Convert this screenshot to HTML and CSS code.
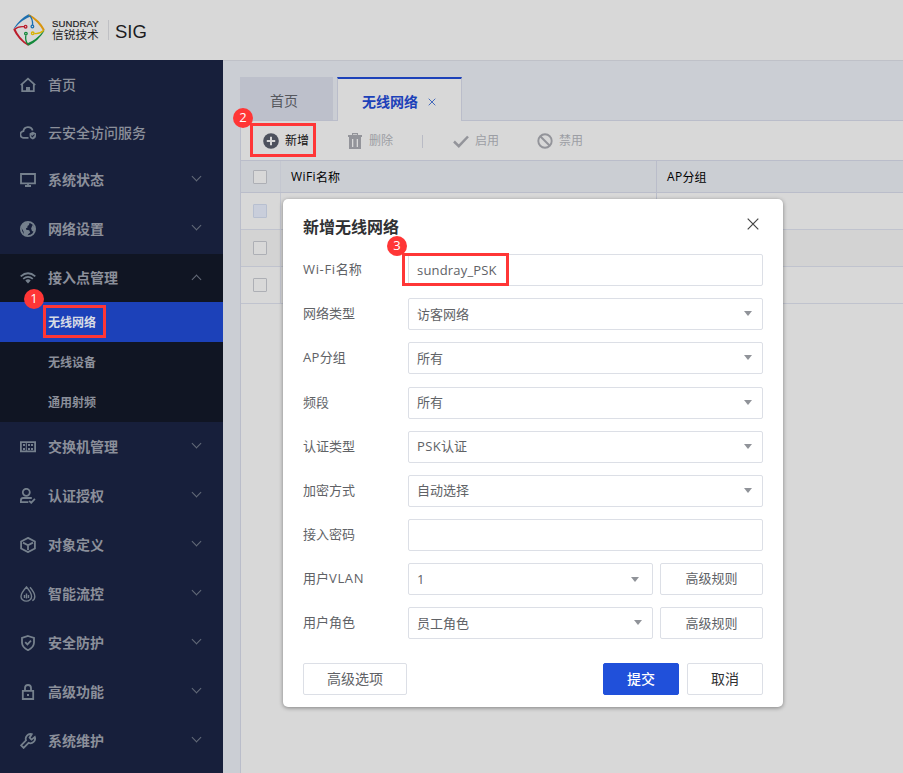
FILE: index.html
```html
<!DOCTYPE html>
<html lang="zh-CN">
<head>
<meta charset="utf-8">
<title>SUNDRAY SIG</title>
<link rel="stylesheet" href="styles.css">
</head>
<body>
<div class="app">
  <header class="header">
    <svg class="logo" viewBox="0 0 32 32" fill="none" stroke-width="1.300">
      <path d="M0.300 15Q6.500 5 15.500 0.200L18 2.200Q8 6 2 14Z" fill="#1c6fb0"/>
      <path d="M16.300 0.200Q26.500 5.500 31.700 15.500L30.500 17.500Q25.500 8 15.500 1.500Z" fill="#d9950f"/>
      <path d="M31.700 16.500Q25.500 27 15.500 31.800L13.500 29.800Q24 25.500 30 17.500Z" fill="#13893b"/>
      <path d="M15 31.800Q5 26 0.200 15.500L2 14.200Q6.500 24.500 15.500 30.500Z" fill="#bb1d2c"/>
      <path d="M16.500 1.500Q20 5 19.600 11" stroke="#1c6fb0"/><circle cx="19.400" cy="12.500" r="1.300" stroke="#1c6fb0"/>
      <path d="M30.500 16.500Q27 20 21.400 19.500" stroke="#d9b200"/><circle cx="19.700" cy="19.300" r="1.300" stroke="#d9b200"/>
      <path d="M15 30.500Q12 27 12.800 21.300" stroke="#13893b"/><circle cx="12.900" cy="19.600" r="1.300" stroke="#13893b"/>
      <path d="M1.500 15.500Q5 12 11 12.700" stroke="#bb1d2c"/><circle cx="12.600" cy="12.700" r="1.300" stroke="#bb1d2c"/>
    </svg>
    <div class="brand"><span class="brand-en">SUNDRAY</span><span class="brand-cn">信锐技术</span></div>
    <span class="product">SIG</span>
  </header>
  <div class="body">
    <nav class="sidebar">
      <a class="item plain"><svg class="icon" viewBox="0 0 16 16"><path d="M.8 8.200 8 1.600l7.200 6.600M2.200 7.500v6.700h11.600V7.500"/><path class="solid" d="M6 10h4v4H6z"/></svg><span>首页</span></a>
      <a class="item plain cloud"><svg class="icon" viewBox="0 0 16 16"><path d="M8.500 12.800H4A3.300 3.300 0 0 1 3.400 6.200 4.700 4.700 0 0 1 12.600 5.600"/><path class="solid" d="m12.800 6.800 3.200 1.400v2.600q0 2.500-3.200 3.700-3.200-1.200-3.200-3.700V8.200Z"/><path class="cut" d="m11.300 10.600 1.200 1.100 2-2.200"/></svg><span>云安全访问服务</span></a>
      <a class="item"><svg class="icon" viewBox="0 0 16 16"><path d="M1 2h14v9.300H1zM8 11.500V14M5 14h6"/></svg><span>系统状态</span><i class="chev"></i></a>
      <a class="item net"><svg class="icon" viewBox="0 0 16 16"><circle cx="8" cy="8" r="7.100"/><path class="solid" d="M1 6 3 3l5-2.500 1.500 1.300-.5 2.200-1.500.9v1.600L6 7.200l.2 1.600 3 .4 1 2.200-1.800 1.500L7 15.200 4 14l-.5-3.500zM12.500 4l2.800 3-.8 4-2.500-1-.9-2.500z"/></svg><span>网络设置</span><i class="chev"></i></a>
      <div class="group">
        <a class="item parent"><svg class="icon" viewBox="0 0 16 16"><path d="M.7 6.400Q8 .2 15.300 6.400M3.200 8.900Q8 4.900 12.800 8.900"/><path class="solid" d="M5.300 10.400Q8 8.200 10.700 10.400L8 13.400Z"/></svg><span>接入点管理</span><i class="chev up"></i></a>
        <a class="sub active"><span>无线网络</span></a>
        <a class="sub"><span>无线设备</span></a>
        <a class="sub"><span>通用射频</span></a>
      </div>
      <a class="item"><svg class="icon" viewBox="0 0 16 16"><path d="M.9 3.200h14.200v9.200H.9z"/><path class="solid" d="M3 5h2v2H3zM8 5h2v2H8zM11 5h2v2h-2zM3 9h2v2H3zM8 9h2v2H8zM11 9h2v2h-2zM5.800 3h1v9h-1z"/></svg><span>交换机管理</span><i class="chev"></i></a>
      <a class="item"><svg class="icon" viewBox="0 0 16 16"><circle cx="6.300" cy="4.300" r="3.500"/><path d="M8.300 14.200H.9v-2Q1 10 3.200 10h8.600M9.200 12.800l2 2 3.700-4"/></svg><span>认证授权</span><i class="chev"></i></a>
      <a class="item"><svg class="icon" viewBox="0 0 16 16"><path d="m8 .9 6.900 3.600v7L8 15.100 1.100 11.500v-7ZM3 5.600 8 8.300l5-2.700M8 8.300V13"/></svg><span>对象定义</span><i class="chev"></i></a>
      <a class="item"><svg class="icon" viewBox="0 0 16 16"><path d="M6.500 1Q1 7 1 10.500a5.300 4.600 0 0 0 10.600 0Q11.600 7 6.500 1ZM10 1.200q4.800 5.500 4.800 9.300 0 3-2.500 4.200M4.500 9v3M6.500 7.500v5M8.500 9v3" stroke-width="1.400"/></svg><span>智能流控</span><i class="chev"></i></a>
      <a class="item"><svg class="icon" viewBox="0 0 16 16"><path d="m8 1 6 2v4.800Q13.800 12.500 8 15.200 2.200 12.500 2 7.800V3ZM5.200 7.200l2.200 2.200L11 5.700"/></svg><span>安全防护</span><i class="chev"></i></a>
      <a class="item"><svg class="icon" viewBox="0 0 16 16"><path d="M2.800 6.800h10.400v8.200H2.800zM5 6.500V4q0-3 3-3t3 3v2.500"/><path class="solid" d="M7 10h2v2H7z"/></svg><span>高级功能</span><i class="chev"></i></a>
      <a class="item"><svg class="icon" viewBox="0 0 16 16"><path d="M11.700 1.200A4.700 4.700 0 0 0 6 7.300L1.100 12.400l2.500 2.500 5-5A4.700 4.700 0 0 0 14.800 4L11.500 6.600 9.600 4.700Z"/></svg><span>系统维护</span><i class="chev"></i></a>
    </nav>
    <main class="main">
      <div class="tabs">
        <div class="tab">首页</div>
        <div class="tab-gap"></div>
        <div class="tab current"><span>无线网络</span><svg class="tab-x" viewBox="0 0 8 8"><path d="m.7.700 6.600 6.600M7.300.7.700 7.300"/></svg></div>
        <div class="tab-rest"></div>
      </div>
      <div class="panel">
        <div class="toolbar">
          <span class="tool add"><svg class="ticon" viewBox="0 0 16 16"><circle cx="8" cy="8" r="7.800"/><path class="plus" d="M8 3.800v8.400M3.800 8h8.400"/></svg>新增</span>
          <span class="tool del"><svg class="ticon" viewBox="0 0 16 16"><path fill-rule="evenodd" d="M1 2h4V0h6v2h4v2H1zM6 1.200V2h4v-.8zM2 4h12v12H2zM5 6v8h1.300V6zM9.700 6v8H11V6z"/></svg>删除</span>
          <i class="split"></i>
          <span class="tool enable"><svg class="ticon" viewBox="0 0 16 16"><path class="line" d="m1 8.500 4.800 4.700L15 3.500"/></svg>启用</span>
          <span class="tool"><svg class="ticon" viewBox="0 0 16 16"><g class="line thin"><circle cx="8" cy="8" r="6.700"/><path d="m3.500 3.500 9 9"/></g></svg>禁用</span>
        </div>
        <div class="row head"><div class="c1"><i class="box"></i></div><div class="c2"><span class="wide">WiFi</span>名称</div><div class="c3"><span class="wide">AP</span>分组</div></div>
        <div class="row"><div class="c1"><i class="box tint"></i></div><div class="c2"></div><div class="c3"></div></div>
        <div class="row alt"><div class="c1"><i class="box"></i></div><div class="c2"></div><div class="c3"></div></div>
        <div class="row"><div class="c1"><i class="box"></i></div><div class="c2"></div><div class="c3"></div></div>
      </div>
    </main>
  </div>

  <section class="dialog">
    <div class="dialog-head"><h2>新增无线网络</h2><svg class="close" viewBox="0 0 12 12"><path d="m.7.700 10.600 10.600M11.300.7.700 11.300"/></svg></div>
    <div class="form">
      <label><span class="wider">Wi-Fi</span>名称</label><div class="field name">sundray_PSK</div>
      <label>网络类型</label><div class="field select">访客网络</div>
      <label><span class="wide">AP</span>分组</label><div class="field select">所有</div>
      <label>频段</label><div class="field select">所有</div>
      <label>认证类型</label><div class="field select"><span><span class="wide">PSK</span>认证</span></div>
      <label>加密方式</label><div class="field select">自动选择</div>
      <label>接入密码</label><div class="field"></div>
      <label>用户<span class="wider">VLAN</span></label><div class="pair"><div class="field select inset">1</div><button class="btn rule">高级规则</button></div>
      <label>用户角色</label><div class="pair"><div class="field select">员工角色</div><button class="btn rule">高级规则</button></div>
    </div>
    <div class="dialog-foot"><button class="btn more">高级选项</button><button class="btn primary">提交</button><button class="btn cancel">取消</button></div>
  </section>

  <i class="mark m1"></i><b class="num n1">1</b>
  <i class="mark m2"></i><b class="num n2">2</b>
  <i class="mark m3"></i><b class="num n3">3</b>
</div>
</body>
</html>
```
FILE: styles.css
```css
* { box-sizing: border-box; }
body { margin: 0; font-family: "Open Sans", "Noto Sans CJK SC", sans-serif; }
.app { position: relative; width: 903px; height: 773px; overflow: hidden; display: flex; flex-direction: column; background: #cbced4; }

.header { height: 60px; flex: none; display: flex; align-items: center; padding-left: 13px; background: #d8d8d8; color: #1c1c1f; font-family: "Liberation Sans", "Noto Sans CJK SC", sans-serif; }
.logo { width: 32px; height: 32px; }
.brand { display: flex; flex-direction: column; width: 57px; height: 20px; margin-left: 7px; border-right: 1px solid #bfc0c4; justify-content: center; }
.brand-en { font-size: 9.500px; line-height: 10px; letter-spacing: 0.150px; -webkit-text-stroke: 0.2px; }
.brand-cn { font-size: 11.700px; line-height: 12px; }
.product { font-size: 18.500px; margin: 3px 0 0 6px; line-height: 20px; }

.body { flex: 1; min-height: 0; display: flex; }
.sidebar { width: 223px; flex: none; background: #171f3b; color: #8b8f9a; }
.item { height: 49px; display: flex; align-items: center; padding: 1px 21px 0 20px; font-size: 14px; font-weight: 700; }
.item.plain { font-weight: 500; }
.item.cloud { height: 46px; padding-top: 2px; }
.item.net { height: 50px; padding-bottom: 1px; }
.item.parent { height: 48px; padding-top: 0; }
.item span { flex: 1; margin-left: 12px; line-height: 20px; }
.icon { width: 16px; height: 16px; fill: none; stroke: #75808d; stroke-width: 1.800; }
.icon .solid { fill: #75808d; stroke: none; }
.icon .cut { stroke: #171f3b; stroke-width: 1.100; }
.chev { width: 7px; height: 7px; border: solid #646b79; border-width: 0 1px 1px 0; transform: translateY(-4px) rotate(45deg); margin-right: 2px; }
.chev.up { transform: translateY(1px) rotate(225deg); }
.group { background: #101523; }
.sub { height: 40px; display: flex; align-items: center; padding-left: 48px; font-size: 12px; font-weight: 700; }
.sub.active { background: #1c41b9; color: #d7dbe5; }

.main { flex: 1; min-width: 0; padding: 16px 0 0 17px; border-top: 1px solid #bfc1c8; display: flex; flex-direction: column; }
.tabs { display: flex; height: 44px; flex: none; }
.tab { width: 93px; display: flex; align-items: center; padding: 3px 0 0 30px; font-size: 14px; color: #55575d; background: #bdc0cb; border-bottom: 1px solid #b9bcc9; }
.tab-gap { width: 4px; border-bottom: 1px solid #babdca; }
.tab.current { width: 125px; background: #d8d8d8; color: #1c41b9; font-weight: 700; border: solid #babdca; border-width: 2px 1px 0; border-top-color: #1c41b9; padding: 1px 0 0 24px; }
.tab-x { width: 8px; height: 8px; margin: 2px 0 0 10px; fill: none; stroke: #456abb; stroke-width: 1; }
.tab-rest { flex: 1; border-bottom: 1px solid #babdca; }
.panel { flex: 1; margin-left: 0; border-left: 1px solid #babdca; background: #d8d8d8; }
.toolbar { height: 40px; border-bottom: 1px solid #babdca; display: flex; align-items: center; padding: 1px 0 0 22px; font-size: 12px; color: #9c9ea4; }
.box { width: 14px; height: 14px; border: 1px solid #adafb5; background: #d8d8d8; border-radius: 1px; }
.tool { display: flex; align-items: center; gap: 6px; width: 84px; line-height: 18px; }
.tool.add { color: #111; }
.tool.del { width: 75px; }
.tool.enable { margin-left: 30px; }
.split { width: 1px; height: 13px; background: #b9bbc5; }
.ticon { width: 16px; height: 16px; fill: #93949a; }
.add .ticon { fill: #4d515d; }
.plus { stroke: #d8d8d8; stroke-width: 2; }
.line { fill: none; stroke: #93949a; stroke-width: 2.500; }
.line.thin { stroke-width: 1.900; }
.row { height: 37px; display: flex; border-bottom: 1px solid #c0c3ce; }
.row.alt { background: #d3d3d3; }
.row.head { height: 32px; background: #cbced3; border-color: #babdca; font-size: 12px; color: #000; }
.row > div { display: flex; align-items: center; }
.c1 { width: 40px; padding-left: 12px; border-right: 1px solid #c4c7d0; }
.c2 { width: 376px; padding-left: 10px; border-right: 1px solid #babdca; }
.c3 { padding-left: 10px; }
.box.tint { background: #c9cedb; border-color: #b7bfd0; }
.wide { letter-spacing: 0.4px; }
.wider { letter-spacing: 0.650px; }

.dialog { position: absolute; left: 283px; top: 199px; width: 500px; height: 508px; padding: 17px 20px 12px; background: #fff; border-radius: 5px; box-shadow: 0 1px 4px rgba(0,0,0,.4); color: #606266; font-size: 13px; }
.dialog-head { height: 38.300px; display: flex; justify-content: space-between; align-items: flex-start; }
h2 { margin: 0; font-size: 16px; line-height: 22px; font-weight: 700; color: #303133; }
.close { width: 12px; height: 12px; margin: 2px 4px 0 0; fill: none; stroke: #444; stroke-width: 1.200; }
.form { display: grid; grid-template-columns: 105px 355px; row-gap: 12.100px; grid-auto-rows: 32px; align-items: center; }
label { line-height: 20px; padding-bottom: 2px; }
.field { height: 32px; border: 1px solid #dcdfe6; border-radius: 2px; padding: 0 10px 1px 8px; display: flex; align-items: center; flex: 1; line-height: 20px; }
.name { letter-spacing: 0.180px; padding-bottom: 0; }
.select { justify-content: space-between; }
.select::after { content: ""; border: solid transparent; border-width: 5px 4px 0; border-top-color: #909399; }
.select.inset { padding: 1px 13px 0 8px; }
.pair { display: flex; gap: 7px; }
.btn { height: 32px; padding: 0 0 2px; border: 1px solid #dcdfe6; border-radius: 2px; background: #fff; color: #606266; font: 14px "Open Sans", "Noto Sans CJK SC", sans-serif; }
.rule { width: 103px; font-size: 13px; }
.dialog-foot { display: flex; margin-top: 24px; }
.more { width: 104px; margin-right: auto; }
.primary { width: 76px; background: #2050da; border-color: #2050da; color: #fff; font-weight: 500; }
.cancel { width: 76px; margin-left: 8px; color: #303133; }

.mark { position: absolute; border: 3px solid #ff3636; }
.num { position: absolute; width: 20px; height: 20px; border-radius: 50%; background: #ff3636; color: #fff; font-size: 13px; font-weight: 400; line-height: 19px; text-align: center; }
.m1 { left: 43px; top: 305px; width: 63px; height: 33px; }
.n1 { left: 24px; top: 289px; }
.m2 { left: 250px; top: 123px; width: 66px; height: 34px; }
.n2 { left: 233px; top: 108px; }
.m3 { left: 402px; top: 253px; width: 107px; height: 33px; }
.n3 { left: 387px; top: 236px; }
```
